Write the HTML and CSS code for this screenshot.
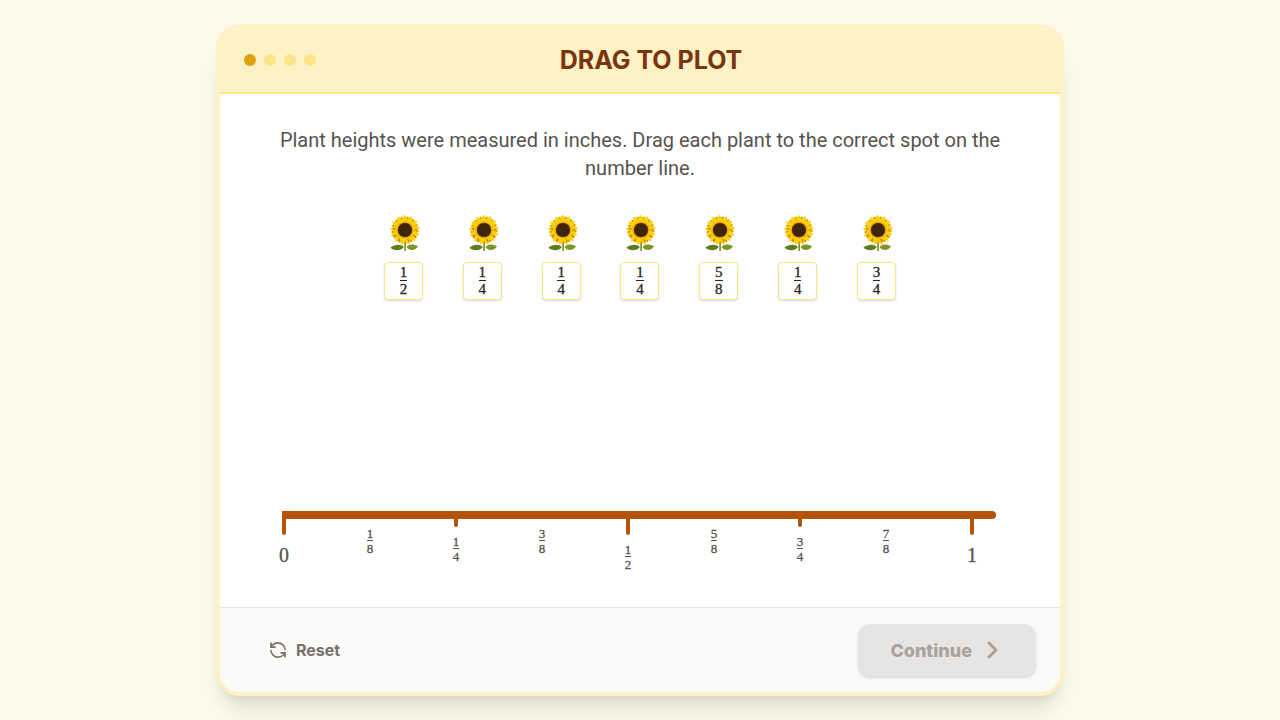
FILE: index.html
```html
<!DOCTYPE html>
<html lang="en">
<head>
<meta charset="utf-8">
<meta name="viewport" content="width=device-width, initial-scale=1">
<title>Drag to Plot</title>
<link rel="stylesheet" href="styles.css">
</head>
<body>
<svg class="sprite" aria-hidden="true">
  <defs>
    <path id="petal" d="M0 -4C-3.800 -8 -3.600 -11.500 -0.500 -15.200C2.800 -12 3.600 -8 0 -4Z"/>
    <g id="ring">
      <use href="#petal"/>
      <use href="#petal" transform="rotate(28)"/>
      <use href="#petal" transform="rotate(55)"/>
      <use href="#petal" transform="rotate(83)"/>
      <use href="#petal" transform="rotate(111)"/>
      <use href="#petal" transform="rotate(138)"/>
      <use href="#petal" transform="rotate(166)"/>
      <use href="#petal" transform="rotate(194)"/>
      <use href="#petal" transform="rotate(222)"/>
      <use href="#petal" transform="rotate(249)"/>
      <use href="#petal" transform="rotate(277)"/>
      <use href="#petal" transform="rotate(305)"/>
      <use href="#petal" transform="rotate(332)"/>
    </g>
    <symbol id="sunflower" viewBox="0 0 39 38">
      <path d="M20.300 27h1.800l-.2 10h-1.600z" fill="#7a9424"/>
      <path d="M19.800 33C17 29.800 11 29.800 6.500 33.500C9 37 17 37.500 19.800 33Z" fill="#5f7d1c"/>
      <path d="M22.500 33C25 29.800 29 29.800 34 32C32 36.800 25 37.500 22.500 33Z" fill="#7d9526"/>
      <g transform="translate(21 16)">
        <use href="#ring" fill="#dc9415" transform="rotate(14) scale(.93)"/>
        <use href="#ring" fill="#fcd20a"/>
        <circle r="9" fill="#f2b80c"/>
        <path d="M-9 5l-2 1M-5.500 9l-1 1.500M3 9.500l1 2M8.500 5.500l2 1M10 0l1.500-.5M-10-1l-1.500 0" stroke="#c07b12" stroke-width="1.300" stroke-linecap="round"/>
        <circle r="7.300" fill="#6b3e08"/>
        <circle r="6.600" fill="#3d240a"/>
      </g>
    </symbol>
  </defs>
</svg>
<main class="card">
  <header class="header">
    <div class="steps" role="img" aria-label="Step 1 of 4">
      <span class="dot active"></span><span class="dot"></span><span class="dot"></span><span class="dot"></span>
    </div>
    <h1 class="title">DRAG TO PLOT</h1>
  </header>
  <section class="content">
    <p class="prompt">Plant heights were measured in inches. Drag each plant to the correct spot on the number line.</p>
    <div class="plants">
      <button class="plant" type="button"><svg class="flower" aria-hidden="true"><use href="#sunflower"/></svg><span class="tile"><span class="frac"><span class="num">1</span><span class="den">2</span></span></span></button>
      <button class="plant" type="button"><svg class="flower" aria-hidden="true"><use href="#sunflower"/></svg><span class="tile"><span class="frac"><span class="num">1</span><span class="den">4</span></span></span></button>
      <button class="plant" type="button"><svg class="flower" aria-hidden="true"><use href="#sunflower"/></svg><span class="tile"><span class="frac"><span class="num">1</span><span class="den">4</span></span></span></button>
      <button class="plant" type="button"><svg class="flower" aria-hidden="true"><use href="#sunflower"/></svg><span class="tile"><span class="frac"><span class="num">1</span><span class="den">4</span></span></span></button>
      <button class="plant" type="button"><svg class="flower" aria-hidden="true"><use href="#sunflower"/></svg><span class="tile"><span class="frac"><span class="num">5</span><span class="den">8</span></span></span></button>
      <button class="plant" type="button"><svg class="flower" aria-hidden="true"><use href="#sunflower"/></svg><span class="tile"><span class="frac"><span class="num">1</span><span class="den">4</span></span></span></button>
      <button class="plant" type="button"><svg class="flower" aria-hidden="true"><use href="#sunflower"/></svg><span class="tile"><span class="frac"><span class="num">3</span><span class="den">4</span></span></span></button>
    </div>
    <div class="number-line">
      <div class="bar"></div>
      <div class="scale">
        <div class="mark"><span class="tick major"></span><span class="whole">0</span></div>
        <div class="mark"><span class="frac small"><span class="num">1</span><span class="den">8</span></span></div>
        <div class="mark"><span class="tick"></span><span class="frac small"><span class="num">1</span><span class="den">4</span></span></div>
        <div class="mark"><span class="frac small"><span class="num">3</span><span class="den">8</span></span></div>
        <div class="mark"><span class="tick major"></span><span class="frac small"><span class="num">1</span><span class="den">2</span></span></div>
        <div class="mark"><span class="frac small"><span class="num">5</span><span class="den">8</span></span></div>
        <div class="mark"><span class="tick"></span><span class="frac small"><span class="num">3</span><span class="den">4</span></span></div>
        <div class="mark"><span class="frac small"><span class="num">7</span><span class="den">8</span></span></div>
        <div class="mark"><span class="tick major"></span><span class="whole">1</span></div>
      </div>
    </div>
  </section>
  <footer class="footer">
    <button class="reset" type="button">
      <svg width="20" height="20" viewBox="0 0 24 24" fill="none" stroke="currentColor" stroke-width="2" stroke-linecap="square" stroke-linejoin="miter" aria-hidden="true"><path d="M20.500 11a8.600 8.600 0 0 0-8.500-7.500 9.300 9.300 0 0 0-6.500 2.500L4 8M3.500 4v4.500h4.500M3.500 13a8.600 8.600 0 0 0 8.500 7.500 9.300 9.300 0 0 0 6.500-2.500L20 16M16 15.500h4.500v4.500"/></svg>
      Reset
    </button>
    <button class="continue" type="button" disabled>
      Continue
      <svg width="24" height="24" viewBox="0 0 24 24" fill="none" stroke="currentColor" stroke-width="3" stroke-linecap="round" stroke-linejoin="round" aria-hidden="true"><path d="M9 5l7 7-7 7"/></svg>
    </button>
  </footer>
</main>
</body>
</html>
```
FILE: styles.css
```css
* { box-sizing: border-box; }
body {
  margin: 0;
  min-height: 100vh;
  padding: 24px;
  display: flex;
  justify-content: center;
  background: #fffbeb;
  font-family: Inter, "Liberation Sans", sans-serif;
}
button { font: inherit; border: 0; background: none; padding: 0; }
.sprite { position: absolute; width: 0; height: 0; }
.card {
  width: 100%;
  max-width: 848px;
  display: flex;
  flex-direction: column;
  border: 4px solid #fdf1c6;
  border-radius: 24px;
  background: #fff;
  overflow: hidden;
  box-shadow: 0 20px 25px -5px rgb(0 0 0 / 10%), 0 8px 10px -6px rgb(0 0 0 / 10%);
}
.header {
  display: grid;
  grid-template-columns: 72px 1fr 50px;
  align-items: center;
  padding: 16px 24px;
  background: #fdf1c6;
  border-bottom: 2px solid #fde588;
}
.steps { display: flex; gap: 8px; }
.dot { width: 12px; height: 12px; border-radius: 50%; background: #fde588; }
.dot.active { background: #dda20a; }
.title {
  margin: 0;
  text-align: center;
  font-size: 25px;
  line-height: 32px;
  font-weight: 700;
  color: #78350f;
}
.content {
  flex: 1;
  display: flex;
  flex-direction: column;
  padding-top: 32px;
}
.prompt {
  margin: 0 auto;
  max-width: 728px;
  text-align: center;
  font-family: Roboto, "Liberation Sans", sans-serif;
  font-size: 20px;
  line-height: 28px;
  color: #57534e;
}
.plants {
  width: 100%;
  max-width: 512px;
  margin: 32px auto 0;
  display: flex;
  justify-content: space-between;
}
.plant {
  display: flex;
  flex-direction: column;
  gap: 10px;
  cursor: grab;
}
.flower { width: 39px; height: 38px; }
.tile {
  height: 38px;
  display: flex;
  align-items: center;
  justify-content: center;
  border: 1px solid #fde588;
  border-radius: 4px;
  background: #fff;
  box-shadow: 0 1px 2px rgb(0 0 0 / 15%);
  color: #292524;
}
.frac {
  display: inline-flex;
  flex-direction: column;
  text-align: center;
  font-family: "Liberation Serif", serif;
  font-size: 15px;
  line-height: 15px;
  -webkit-text-stroke: 0.3px;
}
.num { border-bottom: 1px solid currentColor; }
.den { padding-top: 1px; }
.small { font-size: 13px; line-height: 13px; }
.number-line { margin: auto 0 36px; color: #57534e; }
.bar {
  height: 8px;
  margin: 0 64px 0 62px;
  border-radius: 0 4px 4px 0;
  background: #b45309;
}
.scale {
  display: grid;
  grid-template-columns: repeat(9, 1fr);
  margin: 0 45px 0 21px;
}
.mark {
  display: flex;
  flex-direction: column;
  align-items: center;
}
.mark .frac { margin-top: 8px; }
.tick {
  width: 4px;
  height: 8px;
  border-radius: 0 0 2px 2px;
  background: #b45309;
}
.tick.major { height: 16px; }
.whole {
  margin-top: 8px;
  font-family: "Liberation Serif", serif;
  font-size: 20px;
  line-height: 24px;
  -webkit-text-stroke: 0.3px;
}
.footer {
  display: flex;
  align-items: center;
  justify-content: space-between;
  padding: 16px 24px;
  border-top: 1px solid #e7e5e4;
  background: #fafaf9;
}
.reset, .continue {
  display: flex;
  align-items: center;
  gap: 8px;
}
.reset {
  padding: 0 24px;
  font-size: 16px;
  font-weight: 700;
  color: #78716c;
}
.continue {
  height: 52px;
  padding: 0 32px;
  border-radius: 12px;
  background: #e7e5e4;
  font-size: 18px;
  font-weight: 800;
  color: #a8a29e;
  box-shadow: 0 2px 0 #e4e2e0, 0 2px 4px rgb(0 0 0 / 10%);
}
```
